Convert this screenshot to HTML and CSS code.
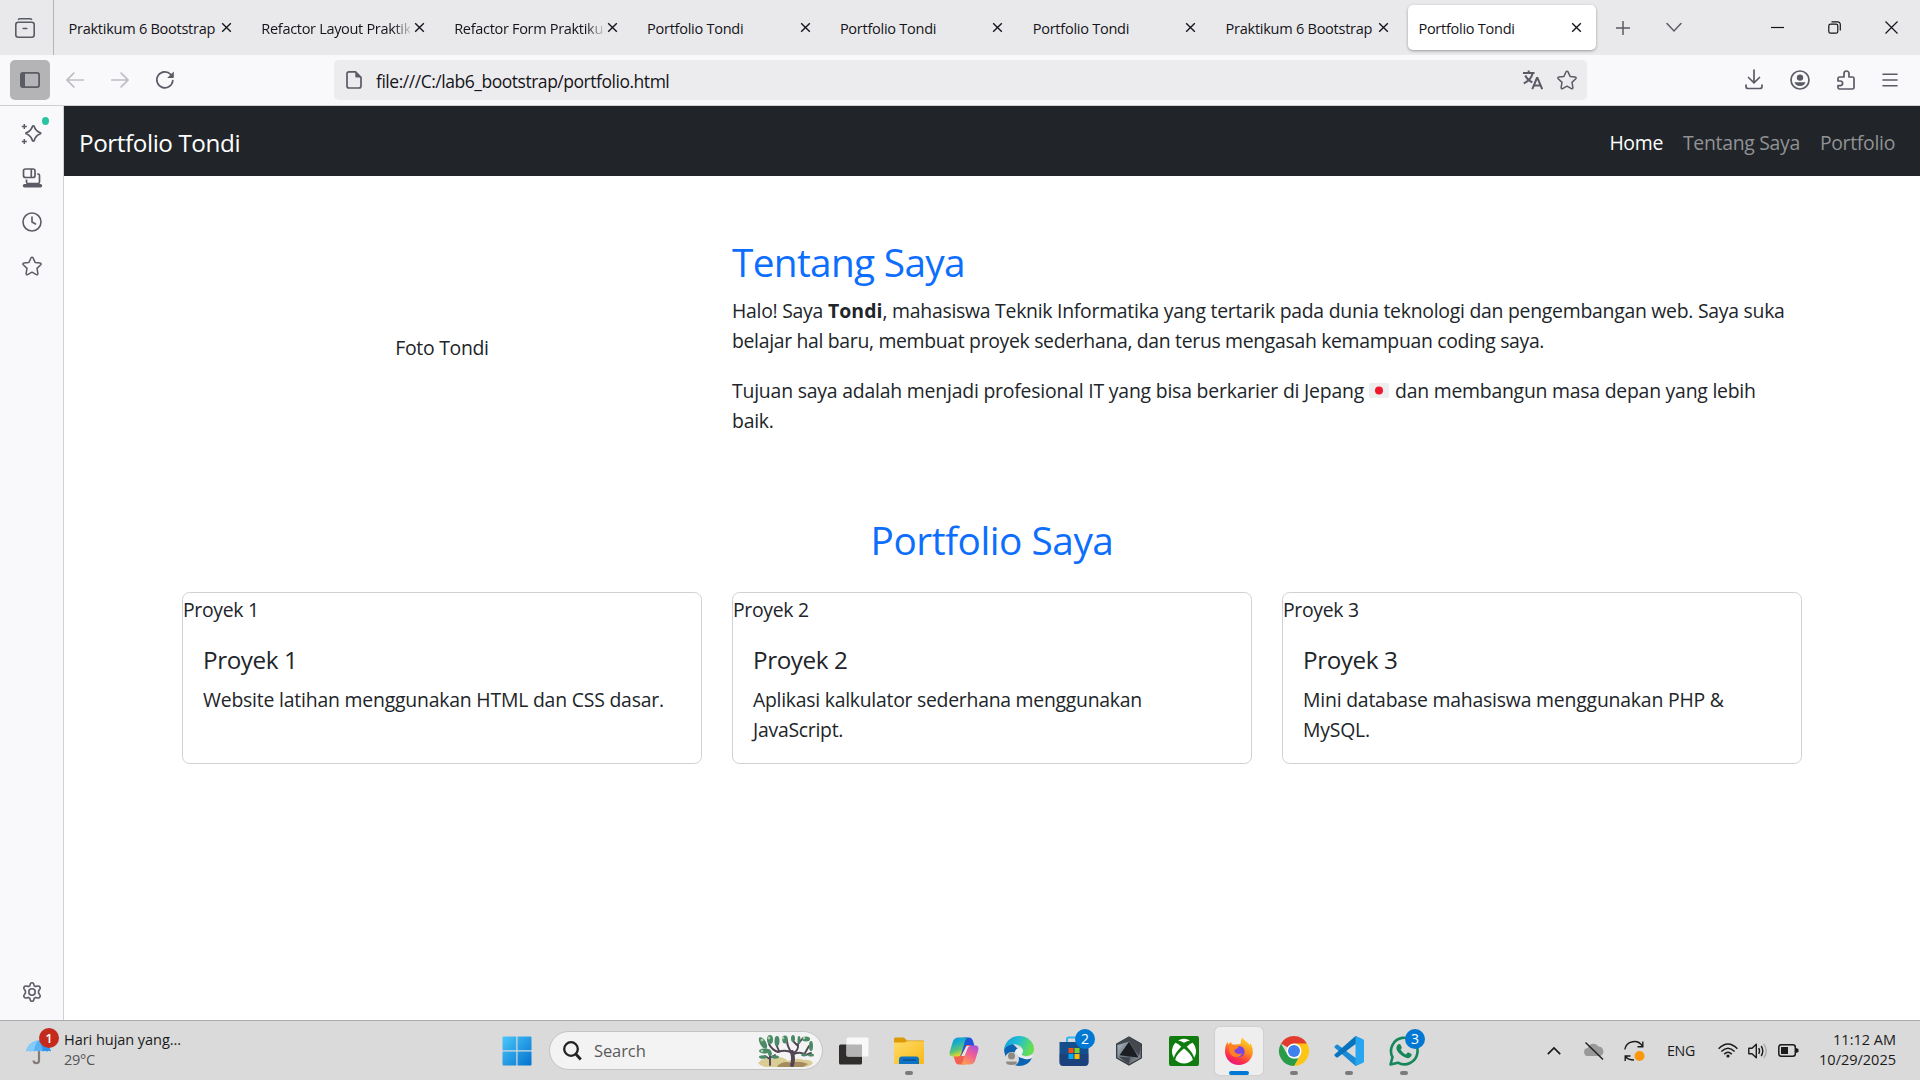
FILE: index.html
```html
<!DOCTYPE html>
<html lang="id">
<head>
<meta charset="utf-8">
<title>Portfolio Tondi</title>
<link rel="stylesheet" href="styles.css">
</head>
<body>
<svg width="0" height="0" class="defs">
  <defs>
    <symbol id="x" viewBox="0 0 12 12"><path d="M1.3 1.3l9.4 9.4M10.7 1.3l-9.4 9.4" fill="none" stroke="#15141a" stroke-width="1.5"/></symbol>
    <symbol id="star" viewBox="0 0 20 20"><path d="M9.1 1.7a1 1 0 0 1 1.8 0l2.2 4.7 5.1.7a1 1 0 0 1 .6 1.7L15 12.4l.9 5.2a1 1 0 0 1-1.5 1L10 16.2l-4.4 2.4a1 1 0 0 1-1.5-1l.9-5.2L1.2 8.8a1 1 0 0 1 .6-1.7l5.100-.7z" fill="none" stroke="#5b5b66" stroke-width="1.5" stroke-linejoin="round"/></symbol>
  </defs>
</svg>

<header class="tabstrip">
  <div class="firefox-view"><svg width="20" height="20" viewBox="0 0 20 20" fill="none" stroke="#5b5b66" stroke-width="1.6" stroke-linecap="round"><path d="M3.500 1.300Q4 .800 5 .800h10q1 0 1.500.500" /><rect x=".8" y="4.200" width="18.400" height="15" rx="2.500"/><path d="M8.200 10.500h3.600"/></svg></div>
  <nav class="tabs">
    <div class="tab"><span>Praktikum 6 Bootstrap</span><svg><use href="#x"/></svg></div>
    <div class="tab"><span class="fade">Refactor Layout Praktik</span><svg><use href="#x"/></svg></div>
    <div class="tab"><span class="fade">Refactor Form Praktiku</span><svg><use href="#x"/></svg></div>
    <div class="tab"><span>Portfolio Tondi</span><svg><use href="#x"/></svg></div>
    <div class="tab"><span>Portfolio Tondi</span><svg><use href="#x"/></svg></div>
    <div class="tab"><span>Portfolio Tondi</span><svg><use href="#x"/></svg></div>
    <div class="tab"><span>Praktikum 6 Bootstrap</span><svg><use href="#x"/></svg></div>
    <div class="tab active"><span>Portfolio Tondi</span><svg><use href="#x"/></svg></div>
  </nav>
  <div class="tab-actions">
    <svg width="16" height="16" viewBox="0 0 16 16"><path d="M8 1v14M1 8h14" stroke="#5b5b66" stroke-width="1.5"/></svg>
    <svg width="16" height="16" viewBox="0 0 16 16"><path d="M1 3.500l7 7.500 7-7.500" fill="none" stroke="#5b5b66" stroke-width="1.500" stroke-linecap="round"/></svg>
  </div>
  <div class="window-buttons">
    <svg width="13" height="13" viewBox="0 0 13 13"><path d="M0 6.500h13" stroke="#15141a" stroke-width="1.200"/></svg>
    <svg width="13" height="13" viewBox="0 0 13 13" fill="none" stroke="#15141a" stroke-width="1.200"><rect x=".8" y="3.200" width="9" height="9" rx="1.800"/><path d="M3.500.800h6.200a2.600 2.600 0 0 1 2.600 2.600v6.200"/></svg>
    <svg width="13" height="13" viewBox="0 0 13 13"><path d="M.5.500l12 12m0-12l-12 12" stroke="#15141a" stroke-width="1.200"/></svg>
  </div>
</header>

<div class="toolbar">
  <div class="tb-left">
    <div class="side-toggle"><svg width="20" height="16" viewBox="0 0 20 16"><rect x=".9" y=".9" width="18.200" height="14.200" rx="2" fill="none" stroke="#5b5b66" stroke-width="1.800"/><path d="M1 1h4v14H1z" fill="#5b5b66"/></svg></div>
    <svg width="18" height="16" viewBox="0 0 18 16" fill="none" stroke="#bdbdc3" stroke-width="1.700" stroke-linecap="round"><path d="M1 8h16.200M7.800 1.200L1 8l6.800 6.800"/></svg>
    <svg width="18" height="16" viewBox="0 0 18 16" fill="none" stroke="#bdbdc3" stroke-width="1.700" stroke-linecap="round"><path d="M17 8H.800M10.200 1.200L17 8l-6.800 6.800"/></svg>
    <svg width="18" height="18" viewBox="0 0 18 18"><path d="M16.800 9.500A8 8 0 1 1 14.800 3.500" fill="none" stroke="#5b5b66" stroke-width="1.700" stroke-linecap="round"/><path d="M17.800.400v5.900q0 .700-.700.700h-5.900z" fill="#5b5b66"/></svg>
  </div>
  <div class="urlbar">
    <svg width="16" height="18" viewBox="0 0 16 18"><path d="M3 .900h6.500l5.500 5.500V15a2 2 0 0 1-2 2H3a2 2 0 0 1-2-2V2.900a2 2 0 0 1 2-2z" fill="none" stroke="#5b5b66" stroke-width="1.700"/><path d="M9.300.900v4.600q0 1 1 1h4.700z" fill="#5b5b66"/></svg>
    <span>file:///C:/lab6_bootstrap/portfolio.html</span>
    <svg width="20" height="20" viewBox="0 0 20 20" fill="none" stroke="#5b5b66" stroke-width="2"><path d="M0 3h11.500M5.700.500V3M9.600 3.200C8.500 8 5 11.500.800 13.400M2.300 5.500c1.500 3.200 3.800 5.500 7 6.800M9.300 19.200l4.600-11.200h.600l4.700 11.200M11 15.500h6.500"/></svg>
    <svg width="20" height="20"><use href="#star"/></svg>
  </div>
  <div class="tb-right">
    <svg width="18" height="20" viewBox="0 0 18 20" fill="none" stroke="#5b5b66" stroke-width="1.700" stroke-linecap="round"><path d="M9 0v12M3.500 7.500L9 12.800 14.500 7.500M1 15v1.500q0 2 2 2h12q2 0 2-2v-1.500"/></svg>
    <svg width="20" height="20" viewBox="0 0 20 20"><circle cx="10" cy="10" r="9" fill="none" stroke="#5b5b66" stroke-width="1.700"/><circle cx="10" cy="7.600" r="3.200" fill="#5b5b66"/><path d="M4.500 12.300h11a5.600 4.500 0 0 1-11 0z" fill="#5b5b66"/></svg>
    <svg width="18" height="20" viewBox="0 0 18 20" fill="none" stroke="#5b5b66" stroke-width="1.700" stroke-linejoin="round"><path d="M2.500 19h13q1.500 0 1.500-1.500V8.500Q17 7 15.500 7H12V3.500a2.500 2.500 0 0 0-5 0V7H2.500Q1 7 1 8.500V11h2.300a2.300 2.300 0 0 1 0 4.600H1v2Q1 19 2.500 19z"/></svg>
    <svg width="16" height="14" viewBox="0 0 16 14" stroke="#5b5b66" stroke-width="1.600" stroke-linecap="round"><path d="M1 1.200h14M1 7h14M1 12.800h14"/></svg>
  </div>
</div>

<div class="workspace">
  <aside class="sidebar">
    <div class="spark"><svg width="20" height="20" viewBox="0 0 20 20" fill="none" stroke="#5b5b66" stroke-width="1.700" stroke-linejoin="round"><path d="M11.300 1.800q.700 0 .9.600c1 3.300 2.100 4.700 6.100 6.400q.800.500 0 1c-4 1.600-5.100 3.100-6.100 6.700q-.900 1.400-1.800 0c-1-3.600-2.200-5.100-6.100-6.700q-.8-.5 0-1c3.900-1.700 5.100-3.100 6.100-6.400q.200-.600.900-.6z"/><path d="M2.300 0v5M-.2 2.500h5M2.300 15v5M-.2 17.500h5" stroke-width="1.500"/></svg><i class="dot"></i></div>
    <svg width="20" height="20" viewBox="0 0 20 20" fill="none" stroke="#5b5b66" stroke-width="1.700"><rect x="1.500" y="1" width="11.500" height="8.500" rx="2"/><path d="M9.300 1v8.500M4.500 11.500V14q0 1.500 1.500 1.500h10q1.500 0 1.500-1.500V7.500q0-1.500-1.500-1.500h-.8"/><path d="M2.500 17.800h16" stroke-width="3.400" stroke-linecap="round"/></svg>
    <svg width="20" height="20" viewBox="0 0 20 20" fill="none" stroke="#5b5b66" stroke-width="1.600" stroke-linecap="round"><circle cx="10" cy="10" r="9"/><path d="M10 5v5l3.500 2"/></svg>
    <svg width="20" height="20"><use href="#star"/></svg>
    <svg class="gear" width="20" height="20" viewBox="0 0 20 20" fill="none" stroke="#5b5b66" stroke-width="1.600" stroke-linejoin="round"><path d="M8.200 2.200q.2-1.500 1.800-1.500t1.800 1.500l.4 1.500q1 .6 1.500.9l2-.6q1.400-.3 2.200 1t-.1 2.300L16.600 8.700v2.600l1.200 1.400q.9 1 .1 2.300t-2.200 1l-2-.6q-.5.400-1.500.9l-.4 1.500Q11.600 19.300 10 19.300t-1.800-1.500l-.4-1.500q-1-.5-1.500-.9l-2 .6q-1.400.3-2.200-1t.1-2.300l1.200-1.400V8.700L2.200 7.300q-.9-1-.1-2.300t2.200-1l2 .6q.5-.3 1.500-.9z"/><circle cx="10" cy="10" r="3.200"/></svg>
  </aside>
  <main class="page">
    <div class="navbar">
      <a class="brand">Portfolio Tondi</a>
      <a class="nav-link on">Home</a><a class="nav-link">Tentang Saya</a><a class="nav-link">Portfolio</a>
    </div>
    <section class="container about">
      <div class="photo">Foto Tondi</div>
      <div class="bio">
        <h2 class="about-title">Tentang Saya</h2>
        <p><span class="l1">Halo! Saya <b>Tondi</b>, mahasiswa Teknik Informatika yang tertarik pada dunia teknologi dan pengembangan web. Saya suka</span><br><span class="l2">belajar hal baru, membuat proyek sederhana, dan terus mengasah kemampuan coding saya.</span></p>
        <p><span class="l3">Tujuan saya adalah menjadi profesional IT yang bisa berkarier di Jepang</span><svg class="flag" width="20" height="15" viewBox="0 0 20 15"><rect width="20" height="15" rx="2" fill="#eee"/><circle cx="10" cy="7.500" r="4" fill="#f0182d"/></svg><span>dan membangun masa depan yang lebih</span><br>baik.</p>
      </div>
    </section>
    <section class="container">
      <h2 class="works-title">Portfolio Saya</h2>
      <div class="cards">
        <article class="card"><div class="caption">Proyek 1</div><div class="card-body"><h5>Proyek 1</h5><p>Website latihan menggunakan HTML dan CSS dasar.</p></div></article>
        <article class="card"><div class="caption">Proyek 2</div><div class="card-body"><h5>Proyek 2</h5><p class="tight">Aplikasi kalkulator sederhana menggunakan<br>JavaScript.</p></div></article>
        <article class="card"><div class="caption">Proyek 3</div><div class="card-body"><h5>Proyek 3</h5><p>Mini database mahasiswa menggunakan PHP &amp;<br>MySQL.</p></div></article>
      </div>
    </section>
  </main>
</div>

<footer class="taskbar">
  <div class="weather">
    <div class="umbrella">
      <svg width="26" height="26" viewBox="0 0 26 26"><path d="M13 10v11.500a2.700 2.700 0 0 1-5.400 0" fill="none" stroke="#857b78" stroke-width="2.200"/><path d="M0 12.500C2 5 7 2 12.500 1.500 18 2 23 5 25 12.500q-2-1.500-4 0-2.200-1.500-4.200 0-2-1.500-4.300 0-2-1.500-4.200 0-2-1.500-4.100 0-2-1.500-4.200 0z" fill="#58b0f5"/><path d="M8.300 12.500C8.500 7 10 4 12.500 1.500 7 2 2 5 0 12.500q2.200-1.500 4.200 0 2-1.500 4.100 0z" fill="#83cbfb"/><path d="M16.800 12.500C16.500 7 15 4 12.500 1.500 18 2 23 5 25 12.500q-2-1.500-4 0-2.200-1.500-4.200 0z" fill="#2d93f3"/></svg>
      <b class="alert">1</b>
    </div>
    <div class="weather-text"><div>Hari hujan yang...</div><div class="temp">29°C</div></div>
  </div>
  <div class="apps">
    <svg class="start" width="30" height="30" viewBox="0 0 30 30"><defs><linearGradient id="win" gradientUnits="userSpaceOnUse" x1="0" y1="0" x2="30" y2="30"><stop offset="0" stop-color="#4cc8fb"/><stop offset="1" stop-color="#0071ce"/></linearGradient></defs><path d="M1.500.500h12.800v13.800H.500V1.500q0-1 1-1zM15.500.500h13q1 0 1 1v12.800h-14zM.500 15.500h13.800v14H1.500q-1 0-1-1zM15.500 15.500h14v13q0 1-1 1h-13z" fill="url(#win)"/></svg>
    <div class="search">
      <svg width="19" height="20" viewBox="0 0 19 20" fill="none" stroke="#222" stroke-width="2.300"><circle cx="8" cy="8" r="6.800"/><path d="M12.800 13l5 5.500" stroke-width="2.800"/></svg>
      <span>Search</span>
      <svg width="56" height="32" viewBox="0 0 56 32"><path d="M0 28q7-7 14-4 8-5 16 2 9-4 16-1 6-1 9 3-3 4-9 4H9q-6 0-9-4z" fill="#d9cd95"/><path d="M19 31q7-6 14-3 8-3 17 1l-5 3H20z" fill="#a68b60"/><g fill="none" stroke="#514653" stroke-linecap="round"><path d="M34 30q2-6 0-13" stroke-width="4"/><path d="M34 18Q28 14 20 17q-6-2-9-8M34 18Q29 12 29 5M35 18q6-2 5-9l5-6M36 19q7-3 12 1l5-2M47 18l4-7M40 11l-5-5M21 16l-3-7M12 30V20M12 24l-5-3M12 23l5-3" stroke-width="1.900"/></g><g fill="#4b8a68"><ellipse cx="5" cy="8" rx="3" ry="6.500" transform="rotate(-30 5 8)"/><ellipse cx="12" cy="4.500" rx="3" ry="4.500"/><ellipse cx="19" cy="6" rx="2.500" ry="5"/><ellipse cx="7" cy="16" rx="6" ry="2.500"/><ellipse cx="27" cy="4.500" rx="2.800" ry="4"/><ellipse cx="35" cy="3.500" rx="2" ry="3.500"/><ellipse cx="41" cy="5" rx="1.500" ry="4"/><ellipse cx="48" cy="4" rx="4" ry="2.500"/><ellipse cx="53" cy="11" rx="2" ry="5"/><ellipse cx="53" cy="20" rx="3" ry="1.600"/><ellipse cx="46" cy="20" rx="3" ry="1.400"/><ellipse cx="5" cy="22" rx="4" ry="1.800"/><ellipse cx="12" cy="18.500" rx="2" ry="2.500"/><ellipse cx="17" cy="22" rx="4" ry="1.700"/></g><g fill="#a9d0a2"><circle cx="4" cy="5" r="1.500"/><circle cx="11" cy="3" r="1.400"/><circle cx="25" cy="3" r="1.300"/><circle cx="46" cy="3" r="1.300"/><circle cx="4" cy="16" r="1.300"/></g></svg>
    </div>
    <div class="app"><svg width="30" height="28" viewBox="0 0 30 28"><rect y="7.500" width="23" height="20" rx="1.500" fill="#2f2e2d"/><rect x="7.500" y=".5" width="22" height="19" rx="1.500" fill="#f8f8f8"/><path d="M7.500 7.500H23v12H9q-1.500 0-1.500-1.500z" fill="#b4b4b4"/></svg></div>
    <div class="app"><svg width="30" height="28" viewBox="0 0 30 28"><defs><linearGradient id="fold" x1="0" y1="0" x2="1" y2="1"><stop offset="0" stop-color="#ffdb69"/><stop offset="1" stop-color="#f8b915"/></linearGradient></defs><path d="M0 2q0-1.500 1.500-1.500H9q1 0 1.700.700L13 3.500h16q1 0 1 1V10H0z" fill="#dc9a04"/><path d="M0 5.500h10.500L13 4.300h16q1 0 1 1V26q0 1-1 1H1q-1 0-1-1z" fill="url(#fold)"/><path d="M5 27v-4.500Q5 19.500 8 19.500h14q3 0 3 3V27z" fill="#0f73c4"/><path d="M9 23h13" stroke="#084c8b" stroke-width="1.300"/></svg><i class="run"></i></div>
    <div class="app"><svg width="30" height="28" viewBox="0 0 30 28"><defs><linearGradient id="cpa" x1="0" y1="0" x2=".4" y2="1"><stop offset="0" stop-color="#138ef0"/><stop offset=".35" stop-color="#16aecb"/><stop offset=".7" stop-color="#5cc27a"/><stop offset="1" stop-color="#eddb23"/></linearGradient><linearGradient id="cpb" x1="1" y1="0" x2=".4" y2="1"><stop offset="0" stop-color="#a34de8"/><stop offset=".5" stop-color="#ee5e97"/><stop offset="1" stop-color="#fd9955"/></linearGradient></defs><path d="M15 .5h5q3 0 4 3.500l1.500 5h-6q-2 0-2.800 2.400L12.500 20H8L12 3.500Q13 .500 15 .500z" fill="#1f55d8"/><path d="M15 27.500h-5q-3 0-4-3.500L4.500 19h6q2 0 2.800-2.400L17.500 8H22L18 24.500q-1 3-3 3z" fill="#f2604f"/><path d="M9.500.500H20q-3 0-4 3.500L12.500 16q-1 3.500-4 3.500H4Q-.300 19.500.700 15L4 4Q5.500.500 9.500.500z" fill="url(#cpa)"/><path d="M20.500 27.500H10q3 0 4-3.500L17.500 12q1-3.500 4-3.500H26q4.300 0 3.300 4.500L26 24q-1.500 3.500-5.500 3.500z" fill="url(#cpb)"/><path d="M17.500 9h3.200q-1.700.8-2.500 3.500L15.500 19h-3.200z" fill="#e6e6ea"/></svg></div>
    <div class="app"><svg width="30" height="30" viewBox="0 0 30 30"><defs><linearGradient id="edg" x1="0" y1="0" x2="1" y2=".3"><stop offset="0" stop-color="#159bd9"/><stop offset=".5" stop-color="#20bdd5"/><stop offset="1" stop-color="#65df51"/></linearGradient></defs><path d="M0 14Q2 6 9 8l10 10q-2 4 3 5 3 .5 6-1-4 8-13 8Q2 29 0 14z" fill="#0c63b1"/><path d="M0 14.500C.500 6 7 0 15 0c9 0 15 6 15 13 0 5-4 7-8 7-3 0-5-1.500-3.500-3.500 1.500-3-1-7-6.500-8C6 7.500 1 11 0 14.500z" fill="url(#edg)"/><path d="M10 19q1-7 6-7 3.500 1 3 4-2.500 3 1 4.500 5 1 8-1.500l1 1q-3 4-8 3-7-2-11-4z" fill="#e9eff1"/><circle cx="8" cy="23" r="7" fill="#dadada"/><circle cx="7.500" cy="20" r="3.500" fill="#8f8984"/><path d="M3 25.500h9q1 0 1 1-.5 2.500-5.500 2.500T2 26.500q0-1 1-1z" fill="#8f8984"/></svg></div>
    <div class="app"><svg width="30" height="30" viewBox="0 0 30 30"><path d="M8 6V3q0-1.500 1.500-1.500h11Q22 1.500 22 3v3" fill="none" stroke="#36b4ef" stroke-width="2"/><path d="M.500 6h29v20q0 4-4 4h-21q-4 0-4-4z" fill="#144e8c"/><path d="M.500 18h29v8q0 4-4 4h-21q-4 0-4-4z" fill="#213b73" opacity=".6"/><path d="M9.500 12h5v5h-5z" fill="#f1511b"/><path d="M15.500 12h5v5h-5z" fill="#80cc28"/><path d="M9.500 18h5v5h-5z" fill="#00adef"/><path d="M15.500 18h5v5h-5z" fill="#fbbc09"/></svg><b class="count">2</b></div>
    <div class="app"><svg width="28" height="30" viewBox="0 0 28 30"><defs><linearGradient id="hex" x1="0" y1=".2" x2="1" y2="1"><stop offset="0" stop-color="#b3bfc9"/><stop offset=".55" stop-color="#59616a"/><stop offset="1" stop-color="#a4a8ac"/></linearGradient></defs><path d="M14 1l12.300 7v14L14 29 1.700 22V8z" fill="url(#hex)" stroke="#33383d" stroke-width="1.300" stroke-linejoin="round"/><path d="M14 1l12.300 7L24 20 14 5.500 3 9 1.700 8z" fill="#43494f"/><path d="M14 5.800L23.500 21.500 4.500 19.200z" fill="#1a1d22"/><path d="M3.500 20.500l11.500 1.300L14 28z" fill="#3e444b"/></svg></div>
    <div class="app"><svg width="30" height="30" viewBox="0 0 30 30"><rect width="30" height="30" rx="2" fill="#107c10"/><g fill="#fff"><path d="M15 12.500Q23 18.500 23.800 23.800A12.300 12.300 0 0 1 6.200 23.800Q7 18.500 15 12.500z"/><path d="M6.300 6.800Q9 7.500 12.200 10.700Q5.500 17.500 4.900 22A12.300 12.300 0 0 1 6.300 6.800z"/><path d="M23.700 6.800Q21 7.500 17.800 10.700Q24.500 17.500 25.100 22A12.300 12.300 0 0 0 23.700 6.800z"/><path d="M9 4.400A12.300 12.300 0 0 1 21 4.400Q18 4.500 15 6.700Q12 4.500 9 4.400z"/></g></svg></div>
    <div class="app current"><svg width="28" height="28" viewBox="0 0 28 28"><defs><linearGradient id="fox" x1=".8" y1="0" x2=".3" y2="1"><stop offset="0" stop-color="#ffe226"/><stop offset=".45" stop-color="#ff8b21"/><stop offset=".8" stop-color="#fb2b50"/><stop offset="1" stop-color="#e51585"/></linearGradient></defs><path d="M17.500 0c0 3 6 5 7 8l1-2q3 5 2.300 10C27 23 21 28 14 28 6 28 0 22 0 14c0-4 1-7 2.500-9l1 2.500Q5 5 6 5l1 2.500h3l5.500-.5q.500-5 2-7z" fill="url(#fox)"/><circle cx="14" cy="14.500" r="5.600" fill="#7b45df"/><path d="M4 8q5-1 7 1l3-.3q-.5 2.500-3.500 3.600Q8 14 11 16q3 2 6 0-1 4-6 4-6-.5-7-7z" fill="#ff8124"/></svg><i class="run wide"></i></div>
    <div class="app"><svg width="30" height="30" viewBox="0 0 30 30"><path d="M15 15L2 7.500A15 15 0 0 1 28 7.500z" fill="#e33b2e"/><path d="M15 7.500h13A15 15 0 0 1 15 30l6.500-11.200z" fill="#fdc616"/><path d="M2 7.500l6.500 11.300q2 3.700 6.500 3.700h4.300L15 30A15 15 0 0 1 2 7.500z" fill="#2a9b48"/><circle cx="15" cy="15" r="7.500" fill="#fff"/><circle cx="15" cy="15" r="6" fill="#3d80ee"/></svg><i class="run"></i></div>
    <div class="app"><svg width="30" height="30" viewBox="0 0 30 30"><path d="M21.500 30L.800 11.800q-.8-1 0-1.800l1.500-1.300q.8-.6 1.600 0L28 26.800z" fill="#1b8bd6"/><path d="M21.500 0L.800 18.200q-.8 1 0 1.800l1.500 1.300q.8.600 1.600 0L28 3.200z" fill="#0873bd"/><path d="M21.500 0l7.500 3.200q1 .5 1 1.600v20.400q0 1.100-1 1.600L21.500 30z" fill="#27a5ee"/></svg><i class="run"></i></div>
    <div class="app"><svg width="30" height="30" viewBox="0 0 30 30"><path d="M1.500 28.500l2-7.300A13.300 13.300 0 1 1 8.900 26.700z" fill="none" stroke="#16875a" stroke-width="2.600" stroke-linejoin="round"/><path d="M9 8.500q1-1 2.300-.3l1.500 3.400q0 .8-1.200 2.200 2 3.400 5.400 4.600l1.600-1.800q.5-.3 1 0l3 1.500q.400 2.400-2 3.700-2.600 1.300-7.600-2Q6.500 15 7.500 11q.5-1.600 1.500-2.500z" fill="#16875a"/></svg><b class="count">3</b><i class="run"></i></div>
  </div>
  <div class="tray">
    <svg class="chev" width="14" height="8" viewBox="0 0 14 8"><path d="M.8 7.200L7 1l6.200 6.200" fill="none" stroke="#1b1b1b" stroke-width="1.700"/></svg>
    <svg class="cloud" width="20" height="20" viewBox="0 0 20 20"><path d="M4.500 15a4 4 0 0 1-.8-8A6 6 0 0 1 14.500 5.500 5 5 0 0 1 16.500 15z" fill="#999"/><path d="M1.500 1.500l17.500 17" stroke="#222" stroke-width="1.500"/></svg>
    <svg class="sync" width="21" height="20" viewBox="0 0 21 20"><path d="M.8 8.500A9.500 9.500 0 0 1 18.500 5.500M18.800.500v5.300h-5.300M6.500 15H1.200v5M1.500 15.500Q4 19 10 19" fill="none" stroke="#1b1b1b" stroke-width="1.400"/><circle cx="15.500" cy="15" r="5" fill="#fb980d"/></svg>
    <span class="lang">ENG</span>
    <svg class="wifi" width="20" height="15" viewBox="0 0 20 15" fill="none" stroke="#1b1b1b" stroke-width="1.500"><path d="M.6 5.800Q10-3.800 19.400 5.800M3.400 8.600q6.600-6.800 13.200 0M6.200 11.300q3.800-3.900 7.600 0"/><circle cx="10" cy="13" r="1.600" fill="#1b1b1b" stroke="none"/></svg>
    <svg class="vol" width="20" height="16" viewBox="0 0 20 16" fill="none" stroke="#1b1b1b" stroke-width="1.400" stroke-linejoin="round"><path d="M.8 5.300H4L8.300 1.200v13.600L4 10.700H.800zM10.700 5.200q1.700 2.800 0 5.600M13.200 3q3.200 5 0 10"/><path d="M15.700.800q5.200 7.200 0 14.400" stroke="#aaa"/></svg>
    <svg width="21" height="13" viewBox="0 0 21 13"><rect x=".8" y=".8" width="16.500" height="11.400" rx="2.500" fill="none" stroke="#1b1b1b" stroke-width="1.500"/><path d="M3 3h7v7H3zM18 4l2.500 1v3L18 9z" fill="#1b1b1b"/></svg>
    <div class="clock"><div>11:12 AM</div><div>10/29/2025</div></div>
  </div>
</footer>
</body>
</html>
```
FILE: styles.css
```css
* { box-sizing: border-box; }
body {
  margin: 0;
  width: 1920px;
  height: 1080px;
  overflow: hidden;
  display: flex;
  flex-direction: column;
  background: #fff;
  color: #15141a;
  font-family: "Open Sans", "Noto Sans", sans-serif;
}
svg { display: block; flex: none; overflow: visible; }
h2, h5, p { margin: 0; font-weight: 400; }
.defs { position: absolute; }

/* Tab strip */
.tabstrip { height: 55px; flex: none; display: flex; background: #e9e9eb; }
.firefox-view {
  width: 54px;
  padding: 18px 0 0 15px;
  border-right: 1px solid #b3b3b8;
}
.tabs { display: flex; gap: 4.850px; padding: 5px 0 5px 4.500px; }
.tab {
  width: 188px;
  height: 45px;
  display: flex;
  align-items: center;
  padding: 0 15px 0 10px;
  border-radius: 5px;
  font-size: 14.55px;
  letter-spacing: -0.27px;
  white-space: nowrap;
}
.tab span { flex: none; width: 149px; }
.tab .fade {
  letter-spacing: -0.33px;
  -webkit-mask: linear-gradient(90deg, #000 132px, rgba(0, 0, 0, .1) 150px);
  mask: linear-gradient(90deg, #000 132px, rgba(0, 0, 0, .1) 150px);
}
.tab svg { width: 11px; height: 11px; margin-left: 3.500px; }
.tab.active { background: #fff; box-shadow: 0 1px 3px rgba(0, 0, 0, .35); }
.tab-actions { display: flex; align-items: center; gap: 35px; margin-left: 18.500px; }
.window-buttons { display: flex; align-items: center; gap: 44px; margin: 0 22px 0 auto; }

/* Toolbar */
.toolbar {
  height: 51px;
  flex: none;
  display: flex;
  align-items: center;
  background: #f9f9fb;
  border-bottom: 1px solid #cfcfd4;
}
.tb-left { width: 334px; display: flex; align-items: center; gap: 27px; padding-left: 10px; }
.side-toggle {
  width: 40px;
  height: 40px;
  display: grid;
  place-items: center;
  margin-right: -11px;
  border-radius: 5px;
  background: #b4b4b7;
}
.urlbar {
  width: 1253px;
  height: 40px;
  display: flex;
  align-items: center;
  gap: 14px;
  padding: 0 10px 0 12px;
  border-radius: 5px;
  background: #ececee;
}
.urlbar span { flex: 1; font-size: 17.5px; letter-spacing: -0.47px; padding-top: 1px; }
.tb-right { display: flex; align-items: center; gap: 27px; margin: 0 22px 0 auto; }

/* Sidebar and page */
.workspace { flex: 1; display: flex; min-height: 0; }
.sidebar {
  width: 64px;
  display: flex;
  flex-direction: column;
  align-items: center;
  gap: 24px;
  padding: 18px 0 18px;
  background: #f9f9fb;
  border-right: 1px solid #cfcfd4;
}
.spark { position: relative; }
.dot { position: absolute; left: 20px; top: -7px; width: 7px; height: 8px; border-radius: 50%; background: #2ac3a2; }
.gear { margin-top: auto; }
.page { flex: 1; background: #fff; color: #212529; font-size: 19.4px; line-height: 30px; letter-spacing: -0.23px; }
.navbar {
  height: 70px;
  display: flex;
  align-items: center;
  gap: 20px;
  padding: 3px 25px 0 15px;
  background: #212529;
  color: #fff;
  letter-spacing: -0.3px;
}
.brand { flex: 1; font-size: 24.25px; letter-spacing: -0.42px; }
.nav-link { color: #909294; }
.nav-link.on { color: #fff; }
.container { width: 1620px; margin: 0 auto; }
.about { height: 338px; display: grid; grid-template-columns: 520px 1070px; gap: 30px; padding: 62px 0 58px; }
.photo { align-self: center; text-align: center; letter-spacing: -0.28px; padding-top: 2px; }
h2 { font-size: 38.8px; line-height: 48px; color: #0d6efd; }
.about-title { margin-bottom: 10px; letter-spacing: -0.68px; }
.bio p { margin-bottom: 20px; white-space: nowrap; }
.l1 { letter-spacing: -0.26px; }
.l1 b { letter-spacing: 0.1px; }
.l2 { letter-spacing: -0.32px; }
.l3 { letter-spacing: -0.2px; }
.flag { display: inline-block; margin: 0 6px 0 5px; }
.works-title { height: 78px; padding-top: 2px; text-align: center; letter-spacing: -0.48px; }
.cards { display: grid; grid-template-columns: repeat(3, 520px); gap: 30px; }
.card { height: 172px; padding-top: 2px; border: 1px solid #d0d1d3; border-radius: 7.500px; }
.caption { letter-spacing: -0.3px; }
.card-body { padding: 20px; }
.card-body p { letter-spacing: -0.2px; }
.card-body .tight { letter-spacing: -0.26px; }
h5 { margin-bottom: 10px; font-size: 24.25px; line-height: 30px; letter-spacing: -0.42px; }

/* Taskbar */
.taskbar {
  position: relative;
  height: 60px;
  flex: none;
  display: flex;
  justify-content: space-between;
  background: #dadada;
  border-top: 1px solid #aaa;
  font-size: 14.55px;
  line-height: 20px;
  color: #1b1b1b;
}
.weather { width: 517px; display: flex; padding-left: 26px; }
.umbrella { position: relative; width: 38px; padding-top: 18px; }
.alert {
  position: absolute;
  left: 13px;
  top: 7px;
  width: 20px;
  height: 20px;
  border-radius: 50%;
  background: #c42b1c;
  color: #fff;
  font-size: 13px;
  font-weight: 600;
  line-height: 20px;
  text-align: center;
}
.weather-text { padding-top: 8px; letter-spacing: -0.06px; }
.temp { color: #555; letter-spacing: -0.26px; }
.apps { flex: 1; display: flex; align-items: center; margin-left: -15px; }
.search {
  width: 274px;
  height: 39px;
  display: flex;
  align-items: center;
  margin: 0 3px 0 17px;
  padding: 0 8px 0 13px;
  border: 1px solid #c3c3c3;
  border-radius: 20px;
  background: #f3f3f3;
}
.search span { flex: 1; padding: 0 0 0 12px; font-size: 16.5px; letter-spacing: -0.1px; color: #5a5a5a; }
.app { position: relative; width: 55px; height: 48px; display: grid; place-items: center; }
.current { width: 48px; margin: 0 3.500px; border-radius: 5px; background: #eee; box-shadow: 0 0 1px 1px #d0d0d0; }
.run { position: absolute; left: calc(50% - 4px); bottom: 0; width: 8px; height: 4px; border-radius: 2px; background: #7b7b7b; }
.run.wide { left: calc(50% - 10px); width: 20px; background: #0078d4; }
.count {
  position: absolute;
  left: 29px;
  top: 2px;
  width: 20px;
  height: 20px;
  border-radius: 50%;
  background: #0078d4;
  color: #fff;
  font-size: 14px;
  font-weight: 400;
  line-height: 20px;
  text-align: center;
}
.tray { display: flex; align-items: center; padding-right: 24px; }
.cloud { margin-left: 23px; }
.sync { margin-left: 20px; }
.lang { margin-left: 22px; font-size: 14.2px; letter-spacing: -0.3px; }
.wifi { margin-left: 23px; }
.vol { margin: 0 10px; }
.clock { margin: -4px 0 0 20px; text-align: right; letter-spacing: -0.03px; width: 77px; white-space: nowrap; }
```
